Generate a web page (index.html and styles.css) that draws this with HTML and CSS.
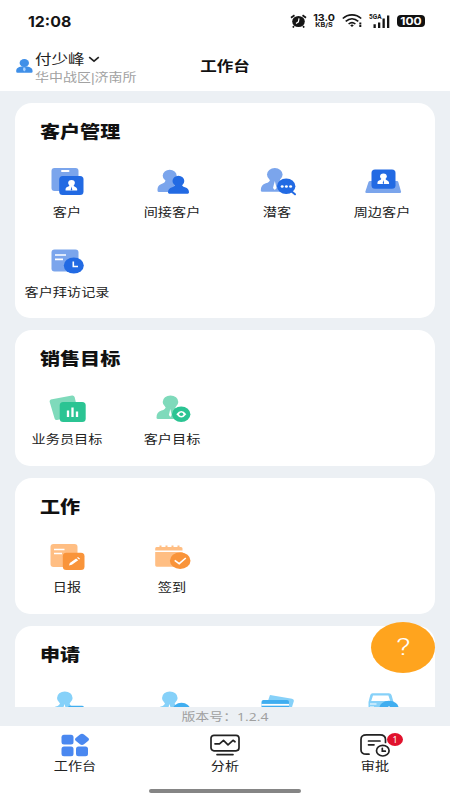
FILE: index.html
```html
<!DOCTYPE html>
<html lang="zh-CN">
<head>
<meta charset="utf-8">
<title>工作台</title>
<link rel="stylesheet" href="styles.css">
</head>
<body>
<svg width="0" height="0" class="defs">
  <defs>
    <g id="person"><ellipse cx="16.8" cy="8.6" rx="7.8" ry="6.5"/><path d="M12 13h9.6c0 3 1.4 3.800 4 4.600 3.200 1 4.500 3.400 4.500 7q0 1.200-1.500 1.200H4.300q-1.500 0-1.500-1.300c0-4 1.700-6.200 5-7.200 2.800-.8 4.200-1.600 4.200-4.300z"/></g>
  </defs>
</svg>
<div class="screen">
  <div class="status">
    <span class="clock"><b>12:08</b></span>
    <div class="indicators">
      <svg width="17" height="14" viewBox="0 0 17 14"><ellipse cx="8.500" cy="7.500" rx="6.300" ry="5.600" fill="#151515"/><path d="M1 3.800 4.500 1.200M16 3.800 12.500 1.200M4 12.200l-1.200 1.300M13 12.200l1.200 1.300" stroke="#151515" stroke-width="1.700"/><path d="M9 4.300 8.400 7.800 6 9.400" fill="none" stroke="#fff" stroke-width="1.200"/></svg>
      <div class="speed"><span>13.0</span><small>KB/S</small></div>
      <svg width="21" height="14" viewBox="0 0 21 14" fill="none" stroke="#151515" stroke-width="1.600"><path d="M.8 4.500C6-.3 14-.3 19.200 4.500M3.700 7.300C7.500 4 12.500 4 16.300 7.300M6.600 10c2-1.700 4.800-1.700 6.800 0"/><path d="m8.200 11.200 1.800 1.800 1.800-1.800q-1.800-1.200-3.600 0z" fill="#151515" stroke="none"/><path d="M18.300 8.500v4.500" stroke-width="2" stroke-dasharray="2 .6"/></svg>
      <div class="signal"><em>5GA</em><svg width="21" height="13" viewBox="0 0 21 13" fill="#151515"><path d="M4.500 9.200h2.300V13H4.500zM9 7.500h2.300V13H9zM13.500 3.500h2.300V13h-2.300zM18 .5h2.300V13H18z"/></svg></div>
      <div class="battery"><span>100</span></div>
    </div>
  </div>

  <header class="top">
    <svg class="avatar" width="17" height="14" viewBox="0 0 17 14" fill="#3f8fe8"><ellipse cx="8.300" cy="4" rx="4.700" ry="4"/><path d="M.2 12.500c0-3.500 2-4.500 5.300-5h5.600c3.300.5 5.500 1.500 5.500 5q0 1.200-1.200 1.200H1.400q-1.200 0-1.200-1.200z"/><path d="M7.400 8.500h1.800l.5 2.500-1.400 1.500L7 11z" fill="#a9d1ff"/></svg>
    <div class="who">
      <div class="name"><span>付少峰</span><svg width="12" height="7" viewBox="0 0 12 7"><path d="m1.200 1.200 4.800 4 4.800-4" fill="none" stroke="#222" stroke-width="1.700"/></svg></div>
      <div class="area"><span>华中战区<i>|</i>济南所</span></div>
    </div>
    <h1><span>工作台</span></h1>
  </header>

  <main>
    <section class="card blue">
      <h2>客户管理</h2>
      <div class="grid">
        <div class="item">
          <svg viewBox="0 0 40 32"><rect class="l" x="3.500" y="2" width="27" height="23" rx="3"/><rect x="13" y="4" width="8.500" height="2" rx="1" fill="#fff"/><rect class="d" x="11.200" y="10" width="24.300" height="19" rx="3.500"/><use href="#person" fill="#fff" transform="translate(16.300 13) scale(.43 .45)"/><path class="d" d="m23.500 20.500-.7 3 .7 1.300.7-1.300z"/></svg>
          <span>客户</span>
        </div>
        <div class="item">
          <svg viewBox="0 0 40 32"><ellipse class="l" cx="16.700" cy="9.700" rx="7" ry="5.900"/><path class="l" d="M12.500 13.500h9V26H6q-1.500 0-1.500-1.500c0-4 1.500-5.700 4.500-6.700 2.500-.8 3.500-2 3.500-4.300z"/><ellipse class="d" cx="25.400" cy="15" rx="5.900" ry="5.200"/><path class="d" d="M22 18h7c0 2 .7 2.500 2.900 3.200 3 .8 4.100 2.600 4.100 5.400q0 1.100-1.300 1.100H16.300q-1.300 0-1.300-1.100c0-2.800 1.200-4.600 4.200-5.400 2.100-.7 2.800-1.200 2.800-3.200z"/></svg>
          <span>间接客户</span>
        </div>
        <div class="item">
          <svg viewBox="0 0 40 32"><use href="#person" class="l"/><path d="m16.800 15-1.800 7 1.800 2 1.800-2z" fill="#fff"/><path d="m33 25 4 3.300" stroke="#226ae3" stroke-width="2" stroke-linecap="round"/><ellipse class="d" cx="28.200" cy="20.300" rx="9.200" ry="7.700"/><g fill="#fff"><ellipse cx="24.200" cy="20.500" rx="1.500" ry="1.200"/><ellipse cx="28.400" cy="20.500" rx="1.500" ry="1.200"/><ellipse cx="32.600" cy="20.500" rx="1.500" ry="1.200"/></g></svg>
          <span>潜客</span>
        </div>
        <div class="item">
          <svg viewBox="0 0 40 32"><path class="l" d="M7 15h27q1 0 1.300 1l2.700 9.500q.4 1.500-1.200 1.500H3.600q-1.600 0-1.200-1.500L5.500 16q.4-1 1.500-1z"/><rect class="d" x="8.500" y="3.500" width="24" height="19.200" rx="3.500"/><use href="#person" fill="#fff" transform="translate(13.200 6.500) scale(.43 .45)"/><path class="d" d="m20.400 14-.7 3 .7 1.300.7-1.300z"/></svg>
          <span>周边客户</span>
        </div>
        <div class="item">
          <svg viewBox="0 0 40 32"><rect class="l" x="3.500" y="3.500" width="27" height="22" rx="3"/><path d="M7 9h11M7 13.300h8" stroke="#fff" stroke-width="1.700"/><ellipse class="d" cx="25.800" cy="19.500" rx="10" ry="8"/><path d="M25.300 15.500v5h4.700" fill="none" stroke="#fff" stroke-width="1.600"/></svg>
          <span>客户拜访记录</span>
        </div>
      </div>
    </section>

    <section class="card green">
      <h2>销售目标</h2>
      <div class="grid">
        <div class="item">
          <svg viewBox="0 0 40 32"><path class="l" d="M4 6.300 24 2.600q2-.3 2.600 1.500L31 22 9 27q-1.800.3-2.400-1.500L1.700 9Q1.200 6.800 4 6.300z"/><rect class="d" x="11.700" y="9" width="26" height="20" rx="3.500"/><path d="M20 17.500v6.500M24.500 14.500V24M29 18.500V24" stroke="#fff" stroke-width="2.300"/></svg>
          <span>业务员目标</span>
        </div>
        <div class="item">
          <svg viewBox="0 0 40 32"><use href="#person" class="l" x=".7" y=".3"/><path d="m17.300 16-1.400 6 1.400 2 1.400-2z" fill="#fff"/><ellipse class="d" cx="28.200" cy="21.300" rx="9.200" ry="7.700"/><path d="M23.300 21.300q5-6.500 10 0-5 6.500-10 0z" fill="#fff"/><ellipse class="d" cx="28.300" cy="21.300" rx="2" ry="1.700"/></svg>
          <span>客户目标</span>
        </div>
      </div>
    </section>

    <section class="card orange">
      <h2>工作</h2>
      <div class="grid">
        <div class="item">
          <svg viewBox="0 0 40 32"><rect class="l" x="2.500" y="3" width="27" height="23" rx="3"/><path d="M6 8.500h10.500M6 12.500h8" stroke="#fff" stroke-width="1.600"/><rect class="d" x="14.800" y="11.800" width="21.700" height="17.200" rx="3.500"/><path d="m21 24.500.8-2.500 6.300-4.500 2.100 1.700-6.300 4.600zM29 16.800l1-.7 2.100 1.700-1 .7z" fill="#fff"/></svg>
          <span>日报</span>
        </div>
        <div class="item">
          <svg viewBox="0 0 40 32"><path class="l" d="M3.500 6h3V4.500h2V6h4V4.500h2V6h4V4.500h2V6h4V4.500h2V6h1.500q1.500 0 1.500 1.500v2H2.200v-2Q2.200 6 3.500 6zM2.200 11h27.500v14.700H3.700q-1.500 0-1.500-1.400z"/><ellipse class="d" cx="27.200" cy="19.700" rx="10.300" ry="8.300"/><path d="m21.700 19.300 4.500 3.400 6.600-5.700" fill="none" stroke="#fff" stroke-width="1.600"/></svg>
          <span>签到</span>
        </div>
      </div>
    </section>

    <section class="card sky">
      <h2>申请</h2>
      <div class="grid">
        <div class="item"><svg viewBox="0 0 40 32"><use href="#person" class="l" y=".3"/><path d="m16.500 15-1.500 5h3z" fill="#fff"/><rect class="d" x="20" y="16.800" width="16" height="12" rx="2"/></svg></div>
        <div class="item"><svg viewBox="0 0 40 32"><use href="#person" class="l" y=".3"/><path d="m16.500 15-1.500 5h3z" fill="#fff"/><ellipse class="d" cx="28.500" cy="21.500" rx="9" ry="7.800"/></svg></div>
        <div class="item"><svg viewBox="0 0 40 32"><path class="l" d="m12 6 22 3.800q2.300.5 1.800 2.500l-3 9.700L8 17.500z"/><rect class="d" x="3.500" y="11" width="27.500" height="16" rx="2"/><path d="M3.500 15.800H31" stroke="#fff" stroke-width="1.800"/></svg></div>
        <div class="item"><svg viewBox="0 0 40 32"><path class="l" d="M9.500 4.300h16.300q2.300 0 2.700 1.700l2 7V25h-25V13l1.800-7q.5-1.700 2.200-1.700zM10 6.500 8.200 12h19l-1.800-5.500z" fill-rule="evenodd"/><path d="M7 15h6.500M7 18h4" stroke="#fff" stroke-width="1.100"/><ellipse class="d" cx="26" cy="19.500" rx="9.700" ry="7.800"/><path d="M26 17v5" stroke="#fff"/></svg></div>
      </div>
    </section>
    <div class="help"><span>?</span></div>
  </main>

  <div class="version"><span>版本号：1.2.4</span></div>

  <nav>
    <div class="tab">
      <svg viewBox="0 0 32 24" fill="#4a88f0"><rect x="2.500" y="1.800" width="12" height="9.800" rx="2.500"/><rect x="2.500" y="13.500" width="12" height="9.800" rx="2.500"/><rect x="17" y="13.500" width="12" height="9.800" rx="2.500"/><path d="M21 1.600q2-1.600 4 0l4 3.200q2 1.600 0 3.200l-4 3.200q-2 1.600-4 0L17 8q-2-1.600 0-3.200z"/></svg>
      <span>工作台</span>
    </div>
    <div class="tab">
      <svg viewBox="0 0 32 24" fill="none" stroke="#222" stroke-width="1.700"><rect x="2" y="2.300" width="28" height="15.500" rx="3"/><path d="M6 10.800h4.500l4-3.500 4.500 4.500 5-4.500 2 1.500M8 21.600h16" stroke-linecap="round" stroke-linejoin="round"/></svg>
      <span>分析</span>
    </div>
    <div class="tab">
      <svg viewBox="0 0 32 24" fill="none" stroke="#222" stroke-width="1.700" stroke-linecap="round"><path d="M10 21.200H7.500Q2 21.200 2 17V6.500q0-4.700 5.500-4.700H21q5.500 0 5.500 4.700v3M9.500 8h11.500M9.500 11.800h5.500"/><ellipse cx="23.800" cy="17.700" rx="6.300" ry="5.300"/><path d="M23.300 15.300v2.900h3"/></svg>
      <span>审批</span>
      <i class="badge">1</i>
    </div>
  </nav>
  <div class="homebar"></div>
</div>
</body>
</html>
```

FILE: styles.css
```css
* { box-sizing: border-box; }
body { margin: 0; font-family: "Noto Sans", "Noto Sans CJK SC", sans-serif; color: #222; }
.defs { display: block; position: absolute; }
.screen { width: 450px; height: 800px; display: flex; flex-direction: column; background: #fff; overflow: hidden; }
svg { display: block; flex: none; }

/* Text is set wider than it is tall throughout the interface. */
span { display: inline-block; white-space: nowrap; transform: scaleX(1.18); }

.status { height: 42px; flex: none; display: flex; justify-content: space-between; align-items: center; padding: 0 25px 0 28px; }
.clock { font: 15px/20px Inter, sans-serif; transform-origin: left; transform: translateY(1px) scaleX(1.06); color: #151515; }
.clock b { font-weight: 700; }
.indicators { display: flex; align-items: center; }
.speed { width: 24px; margin: 0 6px 0 5px; text-align: center; font: 700 9.500px/8px Inter, sans-serif; color: #151515; }
.speed span { display: block; transform: scaleX(1.12); }
.speed small { display: block; font-size: 6px; line-height: 6px; transform: scaleX(1.2); font-weight: 700; }
.signal { position: relative; margin: 0 7px 0 6px; }
.signal em { position: absolute; left: 0; top: -1px; font: 700 6.500px/7px Roboto, sans-serif; color: #151515; }
.battery { width: 28px; height: 12px; border-radius: 4px; background: #111; color: #fff; text-align: center; font: 700 10px/12px Inter, sans-serif; }
.battery span { transform: scaleX(1.2); }

.top { position: relative; height: 49px; flex: none; display: flex; align-items: flex-start; padding: 8px 0 0 16px; }
.avatar { margin-top: 9px; }
.who { margin-left: 2px; }
.who span { transform-origin: left; }
.name { display: flex; align-items: center; height: 18px; font-size: 14px; line-height: 18px; }
.name svg { margin-left: 11px; }
.area { height: 18px; font-size: 12px; line-height: 19px; color: #a2a2a2; }
.area i { font: normal 12px/18px "Liberation Sans", sans-serif; }
.area span { transform: scaleX(1.165); }
h1 { position: absolute; left: 0; right: 0; top: 13px; margin: 0; text-align: center; font-size: 14px; line-height: 21px; font-weight: 700; color: #111; }

main { position: relative; height: 616px; flex: none; overflow: hidden; background: #ecf0f4; padding: 12px 15px 0; display: flex; flex-direction: column; gap: 12px; }
.card { height: 136px; flex: none; background: #fff; border-radius: 17px 17px 15px 15px; padding-top: 16px; }
.card.blue { height: 215px; }
.card.sky { height: 216px; }
h2 { margin: 0 0 0 25px; width: max-content; font-size: 17px; line-height: 25px; font-weight: 900; color: #111; transform: scaleX(1.18); transform-origin: left; }
.grid { display: grid; grid-template-columns: repeat(4, 105px); grid-auto-rows: 79.500px; margin-top: 22px; }
.item { display: flex; flex-direction: column; align-items: center; font-size: 12px; line-height: 18px; }
.item svg { width: 40px; height: 32px; margin-bottom: 6px; }
.blue .l { fill: #7ba5ec; } .blue .d { fill: #226ae3; }
.green .l { fill: #7fdabb; } .green .d { fill: #2bc493; }
.orange .l { fill: #ffbe83; } .orange .d { fill: #f9943a; }
.sky .l { fill: #86d1f9; } .sky .d { fill: #40aef0; }
.help { position: absolute; left: 371px; top: 531px; width: 64px; height: 51px; border-radius: 50%; background: #ffa41e; color: #fff; text-align: center; font: 300 24px/50px Roboto, sans-serif; }
.help span { transform: scaleX(1.3); }

.version { height: 19px; flex: none; background: #ecf0f4; text-align: center; color: #a0a0a0; font-size: 11.500px; line-height: 20px; }
.version span { transform: scaleX(1.21); }
nav { height: 63px; flex: none; display: grid; grid-template-columns: repeat(3, 1fr); padding-top: 7px; }
.tab { position: relative; display: flex; flex-direction: column; align-items: center; font-size: 12px; line-height: 20px; }
.tab svg { width: 32px; height: 24px; }
.badge { position: absolute; left: 87px; top: 0; width: 16px; height: 13px; border-radius: 50%; background: #e1122d; color: #fff; text-align: center; font: normal 9px/13px "Noto Sans", sans-serif; }
.homebar { width: 152px; height: 4px; border-radius: 2px; background: #858585; align-self: center; }
```
